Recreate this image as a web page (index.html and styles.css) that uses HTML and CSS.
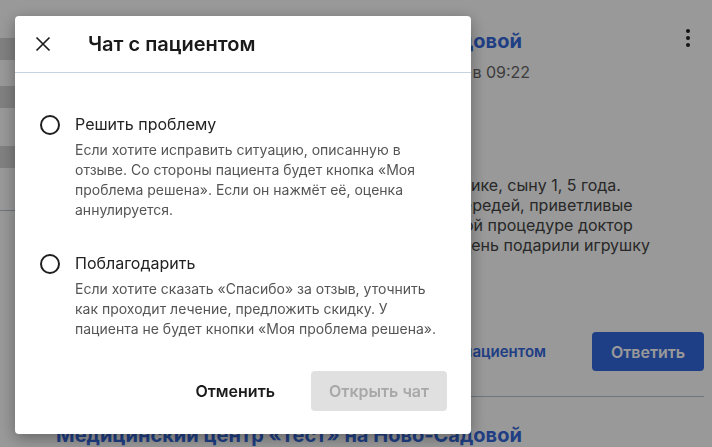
FILE: index.html
```html
<!DOCTYPE html>
<html lang="ru">

<head>
    <meta charset="UTF-8">
    <meta name="viewport" content="width=device-width, initial-scale=1.0">
    <title>Отзывы</title>
    <link rel="stylesheet" href="styles.css">
</head>

<body>

    <div class="page">
        <div class="side">
            <div class="chip chip-first"></div>
            <div class="chip chip-second"></div>
            <div class="chip chip-third"></div>
            <div class="side-line"></div>
        </div>

        <div class="main">
            <div class="review">
                <div class="review-head">
                    <div class="clinic">Медицинский центр «Тест» на Ново-Садовой</div>
                    <div class="kebab"><span></span><span></span><span></span></div>
                </div>
                <div class="meta">Анна Смирнова, отзыв оставлен 12 марта 2024 года в 09:22</div>
                <div class="review-text">
                    <div>Были на приёме у невролога в нашей любимой клинике, сыну 1, 5 года.</div>
                    <div>Всё прошло хорошо, записались через сайт, без очередей, приветливые</div>
                    <div>администраторы, чистый зал, игровая зона. На самой процедуре доктор</div>
                    <div>был так внимателен к сыну, всё объяснил, а в этот день подарили игрушку</div>
                </div>
                <div class="actions">
                    <a class="chat-link" href="#">Чат с пациентом</a>
                    <button class="reply">Ответить</button>
                </div>
            </div>
            <div class="review">
                <div class="review-head">
                    <div class="clinic">Медицинский центр «Тест» на Ново-Садовой</div>
                </div>
            </div>
        </div>
    </div>

    <div class="overlay">
        <div class="dialog">
            <div class="dialog-head">
                <button class="close" aria-label="Закрыть">
                    <svg width="16" height="16" viewBox="0 0 16 16">
                        <path d="M1.5 1.5 L14.5 14.5 M14.5 1.5 L1.5 14.5" stroke="#1f1f1f" stroke-width="1.7" fill="none"/>
                    </svg>
                </button>
                <div class="dialog-title">Чат с пациентом</div>
            </div>

            <div class="dialog-body">
                <label class="option">
                    <span class="radio"></span>
                    <span class="option-text">
                        <span class="option-title">Решить проблему</span>
                        <span class="option-desc">Если хотите исправить ситуацию, описанную в отзыве. Со стороны пациента будет кнопка «Моя проблема решена». Если он нажмёт её, оценка аннулируется.</span>
                    </span>
                </label>
                <label class="option">
                    <span class="radio"></span>
                    <span class="option-text">
                        <span class="option-title">Поблагодарить</span>
                        <span class="option-desc">Если хотите сказать «Спасибо» за отзыв, уточнить как проходит лечение, предложить скидку. У пациента не будет кнопки «Моя проблема решена».</span>
                    </span>
                </label>
            </div>

            <div class="dialog-foot">
                <button class="cancel">Отменить</button>
                <button class="open" disabled>Открыть чат</button>
            </div>
        </div>
    </div>

</body>

</html>
```

FILE: styles.css
```css
* {
    margin: 0;
    padding: 0;
    box-sizing: border-box;
}

body {
    font-family: Inter, "Noto Sans", sans-serif;
    background: white;
    color: #333;
    overflow: hidden;
    height: 100vh;
}

.page {
    display: flex;
}

.side {
    flex: none;
    width: 15px;
    padding-top: 38px;
}

.chip {
    height: 22px;
    background-color: #d6d6d6;
}

.chip-second {
    margin-top: 26px;
}

.chip-third {
    margin-top: 38px;
}

.side-line {
    margin-top: 42px;
    height: 1px;
    background-color: #b9c4d0;
}

.main {
    flex: 1;
    min-width: 0;
    padding: 28px 8px 0 41px;
}

.review-head {
    display: flex;
    justify-content: space-between;
    align-items: center;
}

.clinic {
    font-size: 20px;
    font-weight: 700;
    line-height: 26px;
    color: #3468dc;
    white-space: nowrap;
}

.kebab {
    display: flex;
    flex-direction: column;
    gap: 3px;
    margin-right: 14px;
    margin-top: -6px;
}

.kebab span {
    width: 4px;
    height: 4px;
    border-radius: 50%;
    background-color: #222;
}

.meta {
    margin-top: 8px;
    font-size: 16px;
    line-height: 20px;
    color: #666;
    white-space: nowrap;
}

.review-text {
    margin-top: 93px;
    font-size: 16px;
    line-height: 20px;
    color: #444;
    white-space: nowrap;
    overflow: hidden;
}

.actions {
    display: flex;
    justify-content: flex-end;
    align-items: center;
    gap: 46px;
    margin-top: 77px;
    padding-bottom: 25px;
    border-bottom: 1px solid #b9c4d0;
}

.chat-link {
    font-size: 15px;
    font-weight: 600;
    color: #3468dc;
    text-decoration: none;
}

.reply {
    width: 112px;
    height: 39px;
    border: none;
    border-radius: 4px;
    background-color: #3369de;
    color: white;
    font-family: inherit;
    font-size: 16px;
    font-weight: 600;
}

.review + .review {
    padding-top: 25px;
}

.overlay {
    position: fixed;
    inset: 0;
    background: rgba(0, 0, 0, 0.4);
    padding: 16px 0 0 15px;
}

.dialog {
    width: 456px;
    height: 418px;
    background: white;
    border-radius: 4px;
    box-shadow: 0 4px 16px rgba(0, 0, 0, 0.35);
    display: flex;
    flex-direction: column;
}

.dialog-head {
    height: 57px;
    display: flex;
    align-items: center;
    border-bottom: 1px solid #c6d3e0;
    padding-left: 20px;
}

.close {
    width: 16px;
    height: 16px;
    border: none;
    background: none;
    display: flex;
    margin-top: -1px;
}

.dialog-title {
    margin-left: 37px;
    font-size: 20px;
    font-weight: 600;
    color: #1a1a1a;
}

.dialog-body {
    padding: 39px 24px 0 25px;
    display: flex;
    flex-direction: column;
    gap: 31px;
}

.option {
    display: flex;
    gap: 15px;
    cursor: pointer;
}

.radio {
    flex: none;
    width: 20px;
    height: 20px;
    border: 2px solid #1f1f1f;
    border-radius: 50%;
    margin-top: 3px;
}

.option-text {
    display: flex;
    flex-direction: column;
    gap: 4px;
}

.option-title {
    font-size: 16px;
    line-height: 24px;
    color: #222;
}

.option-desc {
    font-size: 14px;
    line-height: 20px;
    color: #555;
}

.dialog-foot {
    margin-top: auto;
    padding: 0 24px 23px;
    display: flex;
    justify-content: flex-end;
    gap: 20px;
}

.dialog-foot button {
    height: 40px;
    border: none;
    border-radius: 4px;
    font-family: inherit;
    font-size: 16px;
    font-weight: 600;
}

.cancel {
    background: none;
    color: #1a1a1a;
    padding: 0 16px;
}

.open {
    width: 136px;
    background-color: #e0e0e0;
    color: #a8a8a8;
}
```
